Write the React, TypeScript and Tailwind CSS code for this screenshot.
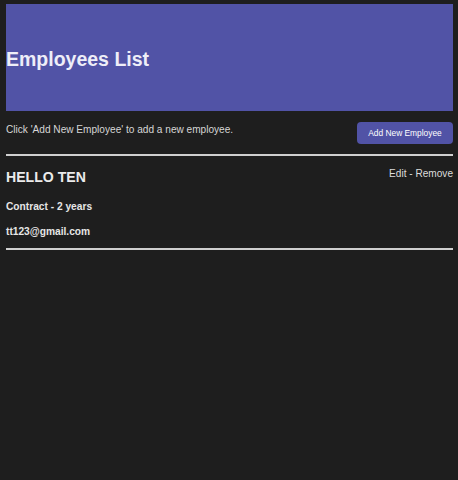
export default function App() {
  return (
    <div className="min-h-screen bg-[#1e1e1e] pt-[4px] pr-[5px] pl-[6px] font-['Liberation_Sans',Arial,sans-serif] text-[#e6e6e6]">
      <header className="flex h-[107px] items-center bg-[#5153a6]">
        <h1 className="mt-[2px] text-[19.5px] leading-[22px] font-bold text-[#eeeef8]">Employees List</h1>
      </header>

      <div className="flex items-start justify-between pt-[11px] pb-[10px]">
        <p className="mt-[2px] text-[10.1px] leading-[12px] text-[#d6d6d6]">
          Click 'Add New Employee' to add a new employee.
        </p>
        <button className="h-[22px] w-[96px] rounded-[4px] bg-[#5153a6] text-[8.4px] text-white">
          Add New Employee
        </button>
      </div>

      <div className="h-[2px] bg-[#cfcfcf]" />

      <div className="flex items-start justify-between pt-[13px] pb-[10px]">
        <div className="flex flex-col">
          <h2 className="text-[14.1px] leading-[17px] font-bold text-[#ebebeb]">HELLO TEN</h2>
          <p className="mt-[15px] text-[10.2px] leading-[12px] font-bold text-[#e6e6e6]">Contract - 2 years</p>
          <p className="mt-[13px] text-[10.2px] leading-[12px] font-bold text-[#e6e6e6]">tt123@gmail.com</p>
        </div>
        <div className="-mt-[1px] text-[10.1px] leading-[12px] text-[#dcdcdc]">Edit - Remove</div>
      </div>

      <div className="h-[2px] bg-[#cfcfcf]" />
    </div>
  );
}
